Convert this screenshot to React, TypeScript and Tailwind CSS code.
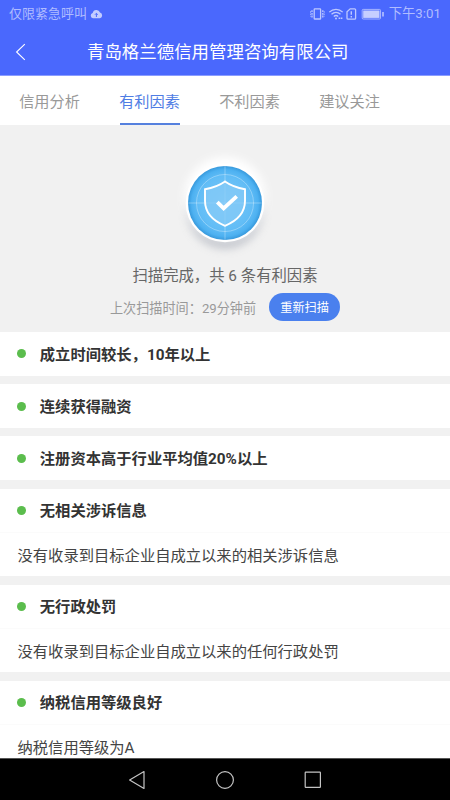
import { ReactNode, useState } from "react";

interface Factor {
  title: string;
  detail?: string;
}

const tabs = ["信用分析", "有利因素", "不利因素", "建议关注"];

const factors: Factor[] = [
  { title: "成立时间较长，10年以上" },
  { title: "连续获得融资" },
  { title: "注册资本高于行业平均值20%以上" },
  { title: "无相关涉诉信息", detail: "没有收录到目标企业自成立以来的相关涉诉信息" },
  { title: "无行政处罚", detail: "没有收录到目标企业自成立以来的任何行政处罚" },
  { title: "纳税信用等级良好", detail: "纳税信用等级为A" },
];

function StatusBar() {
  return (
    <div className="flex h-7 items-center justify-between pl-[9px] pr-[9px] text-[13px] text-[#b0bcff]">
      <div className="flex items-center gap-[3px]">
        <span className="leading-5">仅限紧急呼叫</span>
        <svg width="13" height="10" viewBox="0 0 13 10">
          <path
            d="M3 9.2a2.6 2.6 0 0 1-.3-5.1A3.8 3.8 0 0 1 10 3.6 2.9 2.9 0 0 1 10 9.2Z"
            fill="#c3ccff"
          />
          <path d="M6.4 8V4.4M5 5.7l1.4-1.4 1.4 1.4" fill="none" stroke="#4a68fd" strokeWidth="1" />
        </svg>
      </div>
      <div className="flex items-center">
        <svg width="76" height="14" viewBox="0 0 76 14" fill="none" stroke="#bec8ff" strokeWidth="1.3">
          {/* vibrate */}
          <rect x="5.2" y="1.8" width="6.4" height="10.2" rx="0.6" />
          <path d="M3 3.2v7.4M13.8 3.2v7.4" strokeDasharray="1.9 .8" />
          <path d="M1.6 4.2v5.4M15.2 4.2v5.4" strokeDasharray="1.6 .8" strokeWidth="0.8" />
          {/* wifi */}
          <path d="M20.3 5.1c3.8-3.7 9.6-3.7 13.4 0M22.5 7.3c2.6-2.4 6.4-2.4 9 0M24.8 9.5c1.3-1.2 3.1-1.2 4.4 0" />
          <circle cx="27" cy="11.4" r="1" fill="#bec8ff" stroke="none" />
          <path d="M29.6 11.3h4" strokeWidth="1.5" strokeDasharray="1.6 .6" />
          {/* sim alert */}
          <path d="M41.2 1.8h4.4c.6 0 1 .4 1 1v8.4c0 .6-.4 1-1 1h-6.6c-.6 0-1-.4-1-1V4.8Z" />
          <path d="M42.3 4.2v3.6M42.3 9v1.4" strokeWidth="1.4" />
          {/* battery */}
          <rect x="53.2" y="2.4" width="18.3" height="9.6" rx="1" strokeWidth="0.8" />
          <rect x="54.2" y="3.5" width="16.3" height="7.4" fill="#c6ceff" stroke="none" />
          <path d="M74 5v4.4" strokeWidth="1.5" />
        </svg>
        <span className="ml-[4px] text-[13.3px] leading-5">下午3:01</span>
      </div>
    </div>
  );
}

function TitleBar({ children }: { children: ReactNode }) {
  return (
    <div className="grid h-[47px] grid-cols-[87px_1fr] items-center">
      <button className="pl-[15px]">
        <svg width="12" height="18" viewBox="0 0 12 18" fill="none" stroke="#fff" strokeWidth="1.1">
          <path d="M9.8 1.2 1.6 9l8.2 7.8" />
        </svg>
      </button>
      <h1 className="pt-0.5 text-[17.45px] text-white">{children}</h1>
    </div>
  );
}

function ShieldBadge() {
  return (
    <svg width="110" height="110" viewBox="0 0 110 110">
      <defs>
        <radialGradient id="disc">
          <stop offset="0" stopColor="#79c8f8" />
          <stop offset="0.72" stopColor="#62bdf6" />
          <stop offset="0.9" stopColor="#4db1f1" />
          <stop offset="1" stopColor="#3799dc" />
        </radialGradient>
        <filter id="soft" x="-30%" y="-30%" width="160%" height="160%">
          <feGaussianBlur stdDeviation="4" />
        </filter>
      </defs>
      <circle cx="55" cy="63" r="38" fill="#b8bcc4" opacity="0.8" filter="url(#soft)" />
      <circle cx="55" cy="50" r="41" fill="#fff" filter="url(#soft)" />
      <circle cx="55" cy="55" r="39.3" fill="#fff" />
      <circle cx="55" cy="55" r="37" fill="url(#disc)" />
      <g fill="none" stroke="#fff" strokeOpacity="0.4" strokeWidth="0.8">
        <circle cx="55" cy="55" r="28.5" />
        <path d="M55 18v74M18 55h74" />
      </g>
      <path
        d="M55 33.5c5.2 3.7 12 6.4 20 7.7v11.6c0 11-6.8 19.6-20 25-13.2-5.4-20-14-20-25V41.2c8-1.3 14.8-4 20-7.7Z"
        fill="#84caf7"
        fillOpacity="0.75"
        stroke="#fff"
        strokeWidth="1.9"
      />
      <path d="m47.3 54.2 6.3 6.2L66.7 48.3" fill="none" stroke="#fff" strokeWidth="3.8" />
    </svg>
  );
}

function ScanSummary() {
  return (
    <section className="flex h-[207px] flex-col items-center pt-[23px]">
      <ShieldBadge />
      <p className="mt-[6px] text-[15.35px] leading-6 text-[#666]">扫描完成，共 6 条有利因素</p>
      <div className="mt-[5px] flex items-center gap-[13px]">
        <span className="pt-[3px] text-[13.15px] text-[#999]">上次扫描时间：29分钟前</span>
        <button className="h-7 w-[71px] rounded-full bg-[#4a80ee] pt-[3px] text-[12.2px] text-white">
          重新扫描
        </button>
      </div>
    </section>
  );
}

function FactorCard({ factor }: { factor: Factor }) {
  return (
    <article className="bg-white">
      <div className="flex h-[43.7px] items-center gap-[13.5px] pl-[17.3px]">
        <span className="size-[9px] rounded-full bg-[#5bbd4d]" />
        <h2 className="pt-[3px] text-[15.3px] font-bold text-[#333]">{factor.title}</h2>
      </div>
      {factor.detail && (
        <p className="h-[43.8px] border-t border-[#fbfbfb] pl-[17.5px] text-[15.3px] leading-[46px] text-[#444]">
          {factor.detail}
        </p>
      )}
    </article>
  );
}

function NavBar() {
  return (
    <nav className="flex h-[42px] shrink-0 items-center justify-center gap-[68px] border-t border-[#555] bg-black">
      <svg width="20" height="20" viewBox="0 0 20 20" fill="none" stroke="#c4c4c4" strokeWidth="1.2">
        <path d="M17 1.6v16.8L2.6 10Z" strokeLinejoin="round" />
      </svg>
      <svg width="20" height="20" viewBox="0 0 20 20" fill="none" stroke="#c4c4c4" strokeWidth="1.2">
        <circle cx="10" cy="10" r="8.4" />
      </svg>
      <svg width="20" height="20" viewBox="0 0 20 20" fill="none" stroke="#c4c4c4" strokeWidth="1.2">
        <rect x="2.2" y="2.2" width="15.2" height="15.2" rx="0.6" />
      </svg>
    </nav>
  );
}

export default function App() {
  const [activeTab, setActiveTab] = useState(1);

  return (
    <div className="flex h-[800px] w-[450px] flex-col overflow-hidden bg-[#f1f1f1] font-[Roboto,'Noto_Sans_CJK_SC',sans-serif]">
      <header className="h-[76px] shrink-0 border-b border-[#8b9dff] bg-[#4a68fd]">
        <StatusBar />
        <TitleBar>青岛格兰德信用管理咨询有限公司</TitleBar>
      </header>
      <div className="flex h-[49px] shrink-0 gap-10 bg-white pl-5">
        {tabs.map((tab, index) => (
          <button
            key={tab}
            onClick={() => setActiveTab(index)}
            className={
              index === activeTab
                ? "w-[60px] border-b-2 border-[#5580de] pt-[5px] text-[15.2px] whitespace-nowrap text-[#4f7de4]"
                : "w-[60px] border-b-2 border-transparent pt-[5px] text-[15.2px] whitespace-nowrap text-[#999]"
            }
          >
            <span className="-ml-px">{tab}</span>
          </button>
        ))}
      </div>
      <main className="min-h-0 flex-1 overflow-hidden">
        <ScanSummary />
        <div className="flex flex-col gap-[8.5px]">
          {factors.map((factor) => (
            <FactorCard key={factor.title} factor={factor} />
          ))}
        </div>
      </main>
      <NavBar />
    </div>
  );
}
